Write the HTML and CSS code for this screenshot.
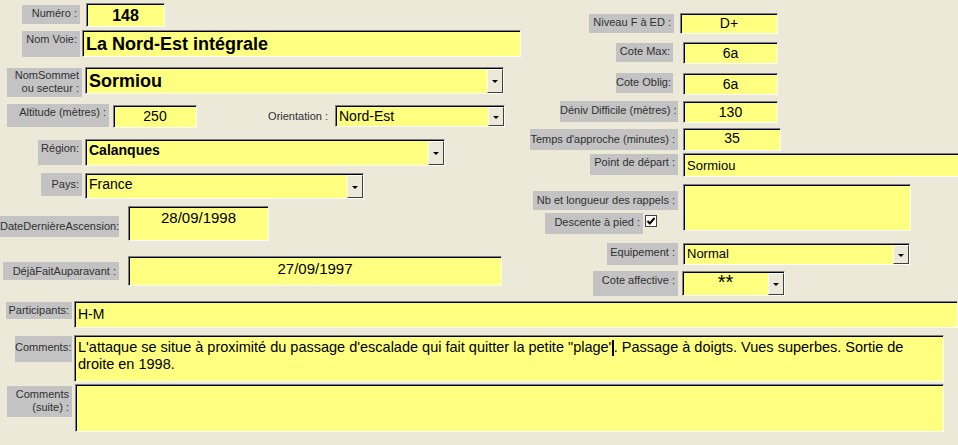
FILE: index.html
```html
<!DOCTYPE html>
<html lang="fr">
<head>
<meta charset="utf-8">
<title>Voie</title>
<link rel="stylesheet" href="styles.css">
</head>
<body>
<div class="form">
  <div class="top">
    <div class="col left">
      <div class="row r1">
        <div class="lbl l-num">Numéro :</div>
        <div class="fld f-num center big16">148</div>
      </div>
      <div class="row r2">
        <div class="lbl l-voie">Nom Voie:</div>
        <div class="fld f-voie big18">La Nord-Est intégrale</div>
      </div>
      <div class="row r3">
        <div class="lbl l-sommet">NomSommet<br>ou secteur :</div>
        <div class="fld combo f-sommet"><span class="val big18">Sormiou</span><span class="btn"></span></div>
      </div>
      <div class="row r4">
        <div class="lbl l-alt">Altitude (mètres) :</div>
        <div class="fld f-alt center">250</div>
        <div class="plain l-orient">Orientation :</div>
        <div class="fld combo f-orient"><span class="val">Nord-Est</span><span class="btn"></span></div>
      </div>
      <div class="row r5">
        <div class="lbl l-region">Région:</div>
        <div class="fld combo f-region"><span class="val bold14">Calanques</span><span class="btn"></span></div>
      </div>
      <div class="row r6">
        <div class="lbl l-pays">Pays:</div>
        <div class="fld combo f-pays"><span class="val">France</span><span class="btn"></span></div>
      </div>
      <div class="row r7">
        <div class="lbl l-date">DateDernièreAscension:</div>
        <div class="fld f-date center">28/09/1998</div>
      </div>
      <div class="row r8">
        <div class="lbl l-deja">DéjàFaitAuparavant :</div>
        <div class="fld f-deja center">27/09/1997</div>
      </div>
    </div>
    <div class="col right">
      <div class="row q1">
        <div class="lbl l-niv">Niveau F à ED :</div>
        <div class="fld f-niv center">D+</div>
      </div>
      <div class="row q2">
        <div class="lbl l-max">Cote Max:</div>
        <div class="fld f-small center">6a</div>
      </div>
      <div class="row q3">
        <div class="lbl l-oblig">Cote Oblig:</div>
        <div class="fld f-small center">6a</div>
      </div>
      <div class="row q4">
        <div class="lbl l-deniv">Déniv Difficile (mètres) :</div>
        <div class="fld f-small center">130</div>
      </div>
      <div class="row q5">
        <div class="lbl l-temps">Temps d'approche (minutes) :</div>
        <div class="fld f-temps center">35</div>
      </div>
      <div class="row q6">
        <div class="lbl l-depart">Point de départ :</div>
        <div class="fld f-depart">Sormiou</div>
      </div>
      <div class="row q7">
        <div class="sub">
          <div class="lbl l-rappels">Nb et longueur des rappels :</div>
          <div class="subrow">
            <div class="lbl l-desc">Descente à pied :</div>
            <svg class="check" width="12" height="12" viewBox="0 0 12 12" aria-hidden="true">
              <rect x="0.5" y="0.5" width="11" height="11" fill="#fff" stroke="#404040"/>
              <path d="M2.5 6 L4.8 8.5 L9.5 3" fill="none" stroke="#000" stroke-width="2"/>
            </svg>
          </div>
        </div>
        <div class="fld f-rappels"></div>
      </div>
      <div class="row q8">
        <div class="lbl l-equip">Equipement :</div>
        <div class="fld combo f-equip"><span class="val">Normal</span><span class="btn"></span></div>
      </div>
      <div class="row q9">
        <div class="lbl l-aff">Cote affective :</div>
        <div class="fld combo f-aff"><span class="val center stars">**</span><span class="btn"></span></div>
      </div>
    </div>
  </div>
  <div class="bottom">
    <div class="row b1">
      <div class="lbl l-part">Participants:</div>
      <div class="fld f-part">H-M</div>
    </div>
    <div class="row b2">
      <div class="lbl l-comm">Comments:</div>
      <div class="fld f-comm memo">L'attaque se situe à proximité du passage d'escalade qui fait quitter la petite "plage". Passage à doigts. Vues superbes. Sortie de droite en 1998.</div>
    </div>
    <div class="row b3">
      <div class="lbl l-suite">Comments<br>(suite) :</div>
      <div class="fld f-suite memo"></div>
    </div>
  </div>
</div>
</body>
</html>
```

FILE: styles.css
```css
html, body {
  margin: 0;
  padding: 0;
}
body {
  width: 958px;
  height: 445px;
  overflow: hidden;
  background: #ece9d8;
  font-family: "Liberation Sans", Arial, sans-serif;
  color: #000;
}
.form {
  width: 958px;
  height: 445px;
  overflow: hidden;
}
.top {
  display: grid;
  grid-template-columns: 530px 428px;
  height: 301px;
}
.col {
  display: flex;
  flex-direction: column;
  min-width: 0;
}
.row {
  display: flex;
  align-items: flex-start;
  flex: none;
}
.lbl {
  flex: none;
  box-sizing: border-box;
  background: #c3c3c3;
  color: #303030;
  font-size: 11px;
  line-height: 13px;
  text-align: right;
  padding: 2px 3px 0 0;
  white-space: nowrap;
}
.plain {
  flex: none;
  font-size: 11px;
  line-height: 13px;
  color: #303030;
  text-align: right;
  white-space: nowrap;
}
.fld {
  flex: none;
  box-sizing: border-box;
  background: #ffff80;
  border: 1px solid;
  border-color: #808080 #fff #fff #808080;
  box-shadow: inset 1px 1px 0 #000;
  font-size: 14px;
  line-height: 17px;
  padding: 2px 3px 0 3px;
  white-space: nowrap;
  overflow: hidden;
}
.center { text-align: center; }
.big16 { font-weight: bold; font-size: 16px; line-height: 19px; }
.big18 { font-weight: bold; font-size: 18px; line-height: 22px; }
.bold14 { font-weight: bold; font-size: 14px; }

.combo {
  display: flex;
  align-items: stretch;
  padding: 0;
}
.combo .val {
  flex: 1;
  padding: 2px 3px 0 3px;
  overflow: hidden;
}
.combo .btn {
  flex: none;
  width: 16px;
  box-sizing: border-box;
  margin: 1px 0 0 0;
  background: #ece9d8;
  border: 1px solid;
  border-color: #fff #404040 #404040 #fff;
  position: relative;
}
.combo .btn::after {
  content: "";
  position: absolute;
  left: 4px;
  top: 50%;
  margin-top: -1px;
  border-left: 3px solid transparent;
  border-right: 3px solid transparent;
  border-top: 3px solid #000;
}

/* Left column */
.r1 { margin-top: 3px; }
.l-num { margin: 2px 0 0 22px; width: 58px; height: 19px; }
.f-num { margin-left: 6px; width: 79px; height: 24px; padding-top: 2px; }

.r2 { margin-top: 3px; }
.l-voie { margin: 1px 0 0 22px; width: 58px; height: 26px; }
.f-voie { margin-left: 2px; width: 439px; height: 27px; padding-top: 2px; }

.r3 { margin-top: 10px; }
.l-sommet { margin: 1px 0 0 7px; width: 75px; height: 29px; padding-top: 1px; }
.f-sommet { margin-left: 3px; width: 419px; height: 27px; }
.f-sommet .val { padding-top: 2px; }

.r4 { margin-top: 7px; }
.l-alt { margin-left: 7px; width: 102px; height: 23px; }
.f-alt { margin: 1px 0 0 4px; width: 84px; height: 23px; }
.l-orient { margin: 6px 0 0 71px; width: 60px; }
.f-orient { margin: 1px 0 0 7px; width: 170px; height: 22px; }

.r5 { margin-top: 11px; }
.l-region { margin: 1px 0 0 38px; width: 44px; height: 25px; }
.f-region { margin-left: 3px; width: 360px; height: 27px; }
.f-region .val { padding-top: 2px; }

.r6 { margin-top: 7px; }
.l-pays { margin: 0 0 0 41px; width: 41px; height: 23px; padding-top: 5px; }
.f-pays { margin-left: 3px; width: 279px; height: 26px; }

.r7 { margin-top: 7px; }
.l-date { margin: 10px 0 0 0; width: 119px; height: 21px; padding-top: 4px; }
.f-date { margin-left: 9px; width: 141px; height: 35px; font-size: 15px; padding-top: 2px; }

.r8 { margin-top: 15px; }
.l-deja { margin: 6px 0 0 3px; width: 116px; height: 18px; padding-top: 3px; }
.f-deja { margin-left: 9px; width: 374px; height: 30px; font-size: 15px; padding-top: 3px; }

/* Right column */
.q1 { margin-top: 13px; }
.l-niv { margin: 1px 0 0 59px; width: 85px; height: 19px; }
.f-niv { margin-left: 6px; width: 98px; height: 21px; padding-top: 1px; }

.q2 { margin-top: 8px; }
.l-max { margin: 1px 0 0 86px; width: 57px; height: 19px; }
.f-small { margin-left: 10px; width: 95px; height: 22px; padding-top: 2px; }

.q3 { margin-top: 9px; }
.l-oblig { margin: 0 0 0 86px; width: 57px; height: 20px; padding-top: 3px; }

.q4 { margin-top: 6px; }
.l-deniv { margin: 0 0 0 30px; width: 118px; height: 21px; padding-top: 3px; }
.q4 .f-small { margin-left: 5px; }

.q5 { margin-top: 5px; }
.l-temps { margin: 1px 0 0 0; width: 148px; height: 21px; padding-top: 4px; }
.f-temps { margin-left: 5px; width: 98px; height: 23px; padding-top: 1px; }

.q6 { margin-top: 2px; }
.l-depart { margin: 1px 0 0 60px; width: 88px; height: 21px; padding-top: 2px; }
.f-depart { margin-left: 5px; width: 280px; height: 24px; font-size: 13px; padding-top: 3px; }

.q7 { margin-top: 7px; }
.sub {
  flex: none;
  width: 153px;
  display: flex;
  flex-direction: column;
}
.l-rappels { margin: 7px 0 0 3px; width: 145px; height: 19px; padding-top: 3px; }
.subrow {
  display: flex;
  align-items: flex-start;
  margin-top: 3px;
}
.l-desc { margin-left: 15px; width: 98px; height: 21px; padding-top: 3px; }
.check { flex: none; margin: 2px 0 0 2px; display: block; }
.f-rappels { width: 228px; height: 47px; }

.q8 { margin-top: 9px; }
.l-equip { margin: 0 0 0 77px; width: 71px; height: 22px; padding-top: 3px; }
.f-equip { margin-left: 5px; width: 227px; height: 22px; font-size: 13px; }
.f-equip .val { padding-top: 1px; }

.q9 { margin-top: 6px; }
.l-aff { margin: 0 0 0 63px; width: 85px; height: 25px; padding-top: 3px; }
.f-aff { margin-left: 4px; width: 103px; height: 25px; }
.f-aff .stars { font-size: 20px; line-height: 20px; padding-top: 0; }

/* Bottom */
.bottom {
  display: flex;
  flex-direction: column;
}
.l-part { margin: 1px 0 0 6px; width: 66px; height: 17px; padding-top: 2px; }
.f-part { margin-left: 2px; width: 884px; height: 27px; padding-top: 4px; }

.b2 { margin-top: 7px; }
.l-comm { margin: 1px 0 0 15px; width: 57px; height: 26px; padding-top: 5px; }
.f-comm {
  margin-left: 2px;
  width: 870px;
  height: 47px;
  font-size: 14.5px;
  /* text caret drawn after "plage" */
  background: linear-gradient(#000, #000) no-repeat 537px 4px / 2px 16px, #ffff80;
}
.memo {
  white-space: normal;
  padding: 3px 10px 0 3px;
}

.b3 { margin-top: 2px; }
.l-suite { margin: 2px 0 0 7px; width: 65px; height: 31px; padding-top: 2px; }
.f-suite { margin-left: 3px; width: 869px; height: 48px; }
```
